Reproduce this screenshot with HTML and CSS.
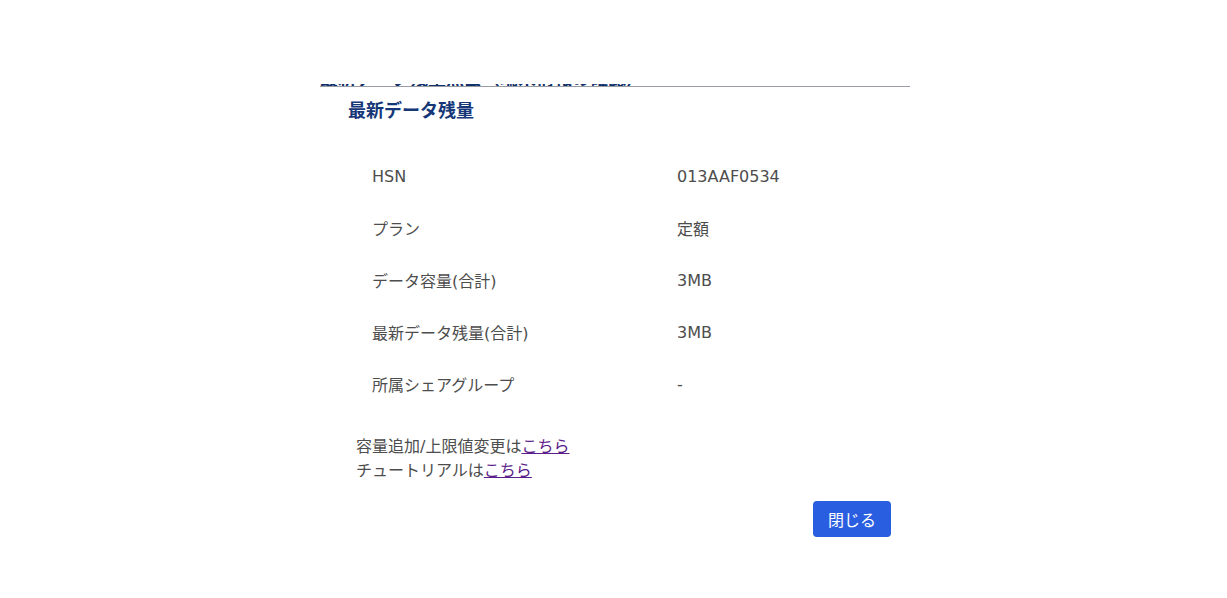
FILE: index.html
```html
<!DOCTYPE html>
<html lang="ja">
<head>
<meta charset="utf-8">
<title>最新データ残量</title>
<link rel="stylesheet" href="styles.css">
</head>
<body>
<div class="modal">
  <div class="clip"><div class="clip-text">最新データ残量照会（端末情報の確認）</div></div>
  <div class="body">
    <h2 class="heading">最新データ残量</h2>
    <div class="rows">
      <div class="row"><span class="label">HSN</span><span class="value">013AAF0534</span></div>
      <div class="row"><span class="label">プラン</span><span class="value">定額</span></div>
      <div class="row"><span class="label">データ容量(合計)</span><span class="value">3MB</span></div>
      <div class="row"><span class="label">最新データ残量(合計)</span><span class="value">3MB</span></div>
      <div class="row"><span class="label">所属シェアグループ</span><span class="value">-</span></div>
    </div>
    <div class="links">
      <div>容量追加/上限値変更は<a href="#" class="link">こちら</a></div>
      <div>チュートリアルは<a href="#" class="link">こちら</a></div>
    </div>
    <div class="actions">
      <button class="btn">閉じる</button>
    </div>
  </div>
</div>
</body>
</html>
```
FILE: styles.css
```css
html, body {
  margin: 0;
  padding: 0;
  background: #ffffff;
}
body {
  font-family: "DejaVu Sans", "Noto Sans CJK JP", sans-serif;
  font-size: 16px;
  color: #4d4d4d;
}
.modal {
  width: 590px;
  margin-left: 320px;
  padding-top: 84px;
}
.clip {
  height: 2px;
  overflow: hidden;
  border-bottom: 1px solid #9a9ba3;
}
.clip-text {
  margin-top: -16px;
  font-family: "Noto Sans CJK JP", sans-serif;
  font-size: 18px;
  line-height: 18px;
  font-weight: bold;
  color: #10306a;
  white-space: nowrap;
}
.body {
  padding: 0 19px 0 28px;
}
.heading {
  margin: 10px 0 0 0;
  font-size: 18px;
  line-height: 24px;
  font-weight: bold;
  color: #153778;
  font-family: "Noto Sans CJK JP", sans-serif;
}
.rows {
  margin-top: 29px;
}
.row {
  display: grid;
  grid-template-columns: 305px 1fr;
  height: 52px;
  align-items: center;
  padding-left: 24px;
}
.links {
  margin-top: 25px;
  padding-left: 8px;
  line-height: 24px;
}
.link {
  color: #5a1d8a;
  text-decoration: underline;
}
.actions {
  display: flex;
  justify-content: flex-end;
  margin-top: 18px;
}
.btn {
  height: 36px;
  width: 78px;
  border: none;
  border-radius: 4px;
  background: #2a5ee0;
  color: #ffffff;
  font-family: "Noto Sans CJK JP", sans-serif;
  font-size: 16px;
  padding: 0;
}
```
